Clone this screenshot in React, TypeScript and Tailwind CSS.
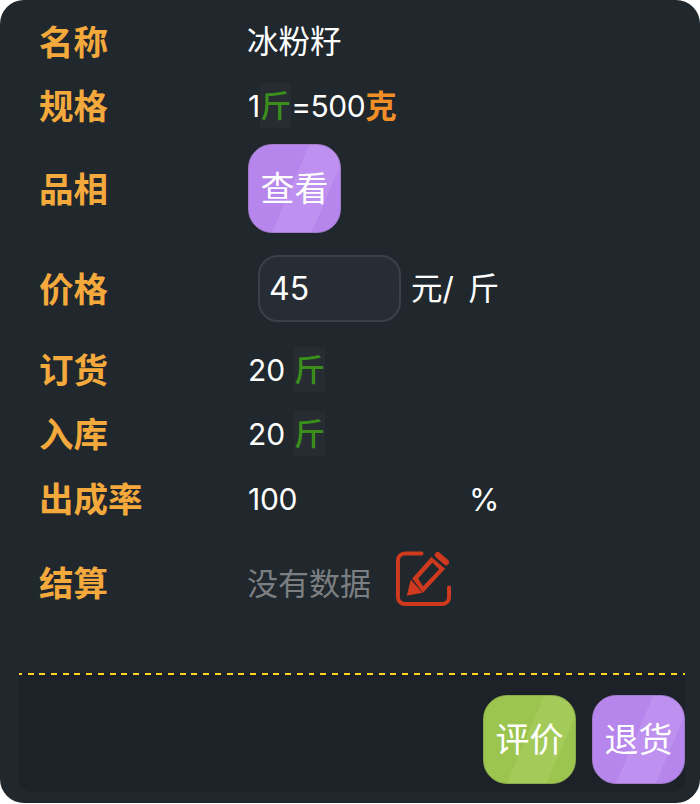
const font = { fontFamily: '"Inter", "Noto Sans CJK SC", sans-serif' };

function Row({ label, className, children }: { label: string; className: string; children: React.ReactNode }) {
  return (
    <div className={`flex ${className}`}>
      <div className="w-[208px] font-bold text-[34.500px] leading-[45px] pt-[2px] text-[#f3a93c] whitespace-nowrap">{label}</div>
      {children}
    </div>
  );
}

function Unit() {
  return <span className="inline-block h-[45px] leading-[45px] bg-[#262c31] text-[#3a8f1c] text-[31px] font-medium">斤</span>;
}

function Btn({ text, green, className }: { text: string; green?: boolean; className?: string }) {
  return (
    <div
      className={`w-[93px] h-[89px] rounded-[24px] flex items-center justify-center text-white text-[34px] border ${
        green
          ? "border-[#8aab4c] bg-[linear-gradient(113deg,#9cc550_47%,#a4cb59_47%,#a4cb59_78%,#9cc550_78%)]"
          : "border-[#a07ccb] bg-[linear-gradient(113deg,#b686ec_47%,#be90ef_47%,#be90ef_78%,#b686ec_78%)]"
      } ${className ?? ""}`}
    >
      {text}
    </div>
  );
}

function EditIcon() {
  return (
    <svg width="55" height="55" viewBox="0 0 56 56" className="ml-[25px] self-start" fill="none">
      <path
        d="M26 2.500H9a7 7 0 0 0-7 7V47a7 7 0 0 0 7 7h38a7 7 0 0 0 7-7V37"
        stroke="#cf3a1f"
        strokeWidth="4"
        strokeLinecap="round"
      />
      <path
        fill="#cf3a1f"
        fillRule="evenodd"
        d="M16.500 28 36 6 50 18 27.500 42.500ZM22.500 28 37 12 44 18.500 27.500 36Z"
      />
      <path fill="#cf3a1f" d="M11 45.500 15 29 27 42.500Z" />
      <path stroke="#cf3a1f" strokeWidth="6" strokeLinecap="round" d="M42.500 4 51 11.500" />
    </svg>
  );
}

export default function App() {
  return (
    <div className="w-[700px] h-[804px] bg-white" style={font}>
      <div className="w-[700px] h-[803px] bg-[#20272d] rounded-[24px] flex flex-col pl-[39px] pt-[19px] text-white text-[31.500px] leading-[45px]">
        <Row label="名称" className="h-[45px] items-center">
          <span>冰粉籽</span>
        </Row>
        <Row label="规格" className="h-[45px] mt-[19px] items-center">
          <span className="text-[30px] pt-[2px] ml-[1px]">1</span>
          <Unit />
          <span className="text-[30px] pt-[2px] tracking-[-0.5px]">=500</span>
          <span className="font-bold text-[#f08f28] pt-[2px]">克</span>
        </Row>
        <Row label="品相" className="h-[89px] mt-[16px] items-center">
          <div className="ml-[1px]">
            <Btn text="查看" />
          </div>
        </Row>
        <Row label="价格" className="h-[67px] mt-[22px] items-center">
          <div className="ml-[11px] w-[143px] h-[67px] rounded-[20px] border-2 border-[#3a4149] bg-[#272d34] pl-[9px] leading-[63px] text-[32px]">45</div>
          <span className="ml-[10px]">元/</span>
          <span className="ml-[14px]">斤</span>
        </Row>
        <Row label="订货" className="h-[45px] mt-[25px] items-center">
          <span className="text-[30px] pt-[2px] w-[46px] ml-[1px]">20</span>
          <Unit />
        </Row>
        <Row label="入库" className="h-[45px] mt-[19px] items-center">
          <span className="text-[30px] pt-[2px] w-[46px] ml-[1px]">20</span>
          <Unit />
        </Row>
        <Row label="出成率" className="h-[45px] mt-[20px] items-center">
          <span className="text-[30px] w-[221px] ml-[1px] tracking-[-0.3px] pt-[2px]">100</span>
          <span className="text-[31px] pt-[2px]">%</span>
        </Row>
        <Row label="结算" className="h-[55px] mt-[30px] items-end">
          <span className="text-[#7c7f82] text-[31px]">没有数据</span>
          <EditIcon />
        </Row>
        <div className="-ml-[20px] mr-[15px] mt-[67px] h-[2px] bg-[repeating-linear-gradient(90deg,#ffd21f_0,#ffd21f_3px,transparent_3px,transparent_8.7px,#ffd21f_8.7px,#ffd21f_11.7px)] bg-[#1d2228]" />
        <div className="-ml-[20px] mr-[15px] h-[117px] bg-[#1d2228] rounded-b-[14px] flex justify-end gap-[16px] pt-[20px]">
          <Btn text="评价" green />
          <Btn text="退货" />
        </div>
      </div>
    </div>
  );
}
